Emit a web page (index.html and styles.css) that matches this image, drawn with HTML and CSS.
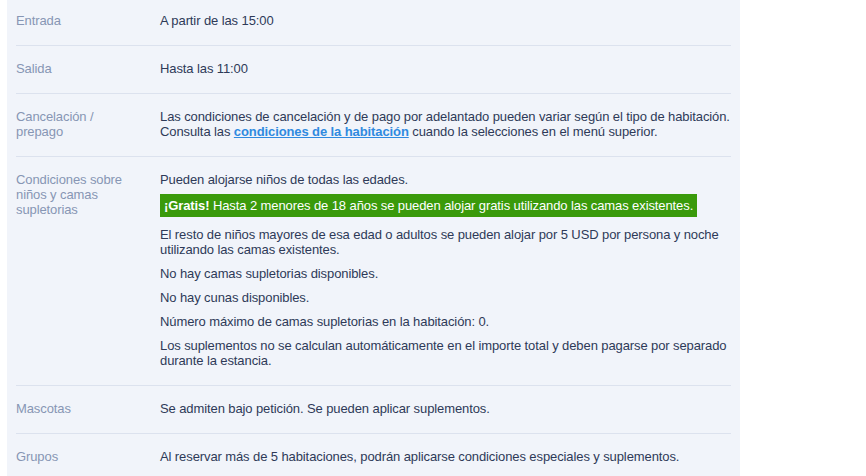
FILE: index.html
```html
<!DOCTYPE html>
<html lang="es">
<head>
    <meta charset="UTF-8">
    <meta name="viewport" content="width=device-width, initial-scale=1.0">
    <title>Condiciones del alojamiento</title>
    <link rel="stylesheet" href="styles.css">
</head>
<body>
    <div class="policies">
        <div class="policy-row">
            <div class="policy-label">Entrada</div>
            <div class="policy-value">
                <p>A partir de las 15:00</p>
            </div>
        </div>

        <div class="policy-row">
            <div class="policy-label">Salida</div>
            <div class="policy-value">
                <p>Hasta las 11:00</p>
            </div>
        </div>

        <div class="policy-row">
            <div class="policy-label">Cancelación / prepago</div>
            <div class="policy-value">
                <p>Las condiciones de cancelación y de pago por adelantado pueden variar según el tipo de habitación. Consulta las <a href="#">condiciones de la habitación</a> cuando la selecciones en el menú superior.</p>
            </div>
        </div>

        <div class="policy-row">
            <div class="policy-label">Condiciones sobre niños y camas supletorias</div>
            <div class="policy-value">
                <p>Pueden alojarse niños de todas las edades.</p>
                <p><span class="free-note"><strong>¡Gratis!</strong> Hasta 2 menores de 18 años se pueden alojar gratis utilizando las camas existentes.</span></p>
                <p>El resto de niños mayores de esa edad o adultos se pueden alojar por 5 USD por persona y noche utilizando las camas existentes.</p>
                <p>No hay camas supletorias disponibles.</p>
                <p>No hay cunas disponibles.</p>
                <p>Número máximo de camas supletorias en la habitación: 0.</p>
                <p>Los suplementos no se calculan automáticamente en el importe total y deben pagarse por separado durante la estancia.</p>
            </div>
        </div>

        <div class="policy-row">
            <div class="policy-label">Mascotas</div>
            <div class="policy-value">
                <p>Se admiten bajo petición. Se pueden aplicar suplementos.</p>
            </div>
        </div>

        <div class="policy-row">
            <div class="policy-label">Grupos</div>
            <div class="policy-value">
                <p>Al reservar más de 5 habitaciones, podrán aplicarse condiciones especiales y suplementos.</p>
            </div>
        </div>
    </div>
</body>
</html>
```

FILE: styles.css
```css
body {
    margin: 0;
    background: #ffffff;
    font-family: "Liberation Sans", Arial, sans-serif;
    font-size: 13px;
    line-height: 15px;
    letter-spacing: -0.1px;
    color: #2e3a58;
}
.policies {
    width: 715px;
    margin: -2px 0 0 7px;
    padding: 0 9px;
    background: #f1f4fa;
}
.policy-row {
    display: flex;
    padding: 15px 0 17px;
    border-bottom: 1px solid #dce2ee;
}
.policy-row:last-child {
    border-bottom: none;
}
.policy-label {
    width: 120px;
    flex-shrink: 0;
    margin-right: 24px;
    color: #8796b4;
}
.policy-value {
    flex: 1;
    margin-right: -6px;
}
.policy-value p {
    margin: 0 0 9px;
}
.policy-value p:last-child {
    margin-bottom: 0;
}
.policy-value a {
    color: #2f8ae0;
    font-weight: bold;
    text-decoration: underline;
}
.free-note {
    display: inline-block;
    margin: -2px 0 1px;
    padding: 4px;
    background: #3a9a0b;
    color: #ffffff;
}
```
